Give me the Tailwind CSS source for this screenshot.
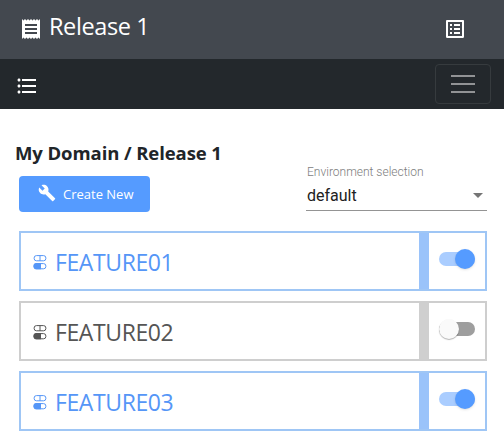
<!DOCTYPE html>
<html lang="en">
<head>
<meta charset="utf-8">
<title>Release 1</title>
<script src="https://cdn.jsdelivr.net/npm/@tailwindcss/browser@4"></script>
</head>
<body class="w-[504px] h-[448px] overflow-hidden bg-white font-['Open_Sans','Noto_Sans',sans-serif] text-[#212529]">
<svg class="hidden">
  <symbol id="toggles" viewBox="0 0 14 16">
    <rect x="1.1" y="1.6" width="11.8" height="5.2" rx="2.4" fill="none" stroke="currentColor"/>
    <path d="M7 1.6v5.2" stroke="currentColor"/>
    <rect x="1.1" y="9.6" width="11.8" height="5.2" rx="2.4" fill="none" stroke="currentColor"/>
    <path d="M3.5 9.1H8v6.2H3.5a2.9 2.9 0 0 1 0-6.2z" fill="currentColor"/>
  </symbol>
</svg>
<header class="h-[59px] bg-[#43484f] text-white flex items-start pl-[19px] pr-[37px]">
  <svg class="w-6 h-6 mt-[17px]" viewBox="0 0 24 24" fill="currentColor"><path d="M18 17H6v-2h12v2zm0-4H6v-2h12v2zm0-4H6V7h12v2zM3 22l1.5-1.5L6 22l1.5-1.5L9 22l1.5-1.5L12 22l1.5-1.5L15 22l1.5-1.5L18 22l1.5-1.5L21 22V2l-1.5 1.5L18 2l-1.5 1.5L15 2l-1.5 1.5L12 2l-1.5 1.5L9 2 7.5 3.5 6 2 4.5 3.5 3 2v20z"/></svg>
  <h1 class="ml-[6px] mt-[9px] text-[23.5px] leading-[34px] tracking-[-0.4px]">Release 1</h1>
  <svg class="w-6 h-6 mt-[17px] ml-auto" viewBox="0 0 24 24" fill="currentColor"><path d="M19 5v14H5V5h14m1.1-2H3.9c-.5 0-.9.4-.9.9v16.2c0 .4.4.9.9.9h16.2c.4 0 .9-.5.9-.9V3.9c0-.5-.5-.9-.9-.9zM11 7h6v2h-6V7zm0 4h6v2h-6v-2zm0 4h6v2h-6zM7 7h2v2H7zm0 4h2v2H7zm0 4h2v2H7z"/></svg>
</header>
<nav class="h-[50px] bg-[#23282c] text-white flex items-center justify-between pl-[15px] pr-[13px]">
  <svg class="w-6 h-6 mt-1" viewBox="0 0 24 24" fill="currentColor"><path d="M4 10.5c-.83 0-1.5.67-1.5 1.5s.67 1.5 1.5 1.5 1.5-.67 1.5-1.5-.67-1.5-1.5-1.5zm0-6c-.83 0-1.5.67-1.5 1.5S3.17 7.5 4 7.5 5.5 6.83 5.5 6 4.83 4.5 4 4.5zm0 12c-.83 0-1.5.68-1.5 1.5s.68 1.5 1.5 1.5 1.5-.68 1.5-1.5-.67-1.5-1.5-1.5zM7 19h14v-2H7v2zm0-6h14v-2H7v2zm0-8v2h14V5H7z"/></svg>
  <button class="w-14 h-10 rounded border border-[#363b3e] flex flex-col items-center justify-center gap-1.5 text-[#919395]">
    <span class="w-6 h-0.5 bg-current"></span><span class="w-6 h-0.5 bg-current"></span><span class="w-6 h-0.5 bg-current"></span>
  </button>
</nav>
<main class="pt-[31px] pl-[15px] pr-[17px]">
  <div class="flex justify-between h-[91px]">
    <div>
      <h2 class="text-[18.5px] leading-[26px] font-bold tracking-[-0.09px] whitespace-nowrap">My Domain / Release 1</h2>
      <button class="mt-[10px] ml-1 w-[131px] h-9 rounded-[4px] bg-[#559bff] text-white flex items-center pl-[19px] whitespace-nowrap">
        <svg class="w-[18px] h-[18px] -mt-0.5" viewBox="0 0 24 24" fill="currentColor"><path d="M22.7 19l-9.1-9.1c.9-2.3.4-5-1.5-6.9-2-2-5-2.4-7.4-1.3L9 6 6 9 1.6 4.7C.4 7.1.9 10.1 2.9 12.1c1.9 1.9 4.6 2.4 6.9 1.5l9.1 9.1c.4.4 1 .4 1.4 0l2.3-2.3c.5-.4.5-1.1.1-1.4z"/></svg>
        <span class="ml-[7px] mt-0.5 text-[13px]">Create New</span>
      </button>
    </div>
    <div class="w-[181px] pt-6 font-[Roboto,sans-serif]">
      <div class="pl-px text-[12px] leading-4 text-[#7d7d7d] font-light">Environment selection</div>
      <div class="h-[31px] border-b border-[#949494] flex items-center justify-between text-[16px] text-[#212121] pl-px pr-1">
        <span class="mt-0.5">default</span>
        <span class="mt-px border-x-[5px] border-x-transparent border-t-[5px] border-t-[#757575]"></span>
      </div>
    </div>
  </div>
  <section class="ml-1 flex flex-col gap-[10px] text-[23px]">
    <article class="h-[60px] border-2 border-[#9fc6f5] text-[#5596f7] flex items-center">
      <svg class="w-[14px] h-4 ml-3 mt-0.5"><use href="#toggles"/></svg><span class="ml-2 mt-0.5 flex-1 tracking-[-0.4px]">FEATURE01</span>
      <div class="w-[10px] h-full bg-[#9ac3fa]"></div>
      <div class="w-14 h-5 pl-[10px] -mt-1"><div class="w-9 h-5 flex items-center"><div class="w-9 h-[14px] rounded-full bg-[#aacdff] flex items-center justify-end"><span class="size-5 shrink-0 rounded-full bg-[#559bff] shadow-sm"></span></div></div></div>
    </article>
    <article class="h-[60px] border-2 border-[#cecece] text-[#555] flex items-center">
      <svg class="w-[14px] h-4 ml-3 mt-0.5"><use href="#toggles"/></svg><span class="ml-2 mt-0.5 flex-1 tracking-[-0.4px]">FEATURE02</span>
      <div class="w-[10px] h-full bg-[#cfcfcf]"></div>
      <div class="w-14 h-5 pl-[10px] -mt-1"><div class="w-9 h-5 flex items-center"><div class="w-9 h-[14px] rounded-full bg-[#9e9e9e] flex items-center"><span class="size-5 shrink-0 rounded-full bg-[#fafafa] shadow-[0_1px_1px_rgba(0,0,0,0.3)]"></span></div></div></div>
    </article>
    <article class="h-[60px] border-2 border-[#9fc6f5] text-[#5596f7] flex items-center">
      <svg class="w-[14px] h-4 ml-3 mt-0.5"><use href="#toggles"/></svg><span class="ml-2 mt-0.5 flex-1 tracking-[-0.4px]">FEATURE03</span>
      <div class="w-[10px] h-full bg-[#9ac3fa]"></div>
      <div class="w-14 h-5 pl-[10px] -mt-1"><div class="w-9 h-5 flex items-center"><div class="w-9 h-[14px] rounded-full bg-[#aacdff] flex items-center justify-end"><span class="size-5 shrink-0 rounded-full bg-[#559bff] shadow-sm"></span></div></div></div>
    </article>
  </section>
</main>
</body>
</html>
